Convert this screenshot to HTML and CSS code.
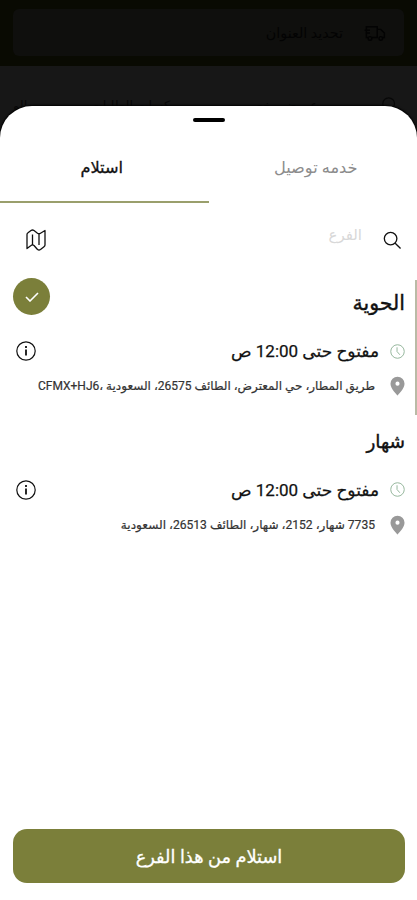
FILE: index.html
```html
<!DOCTYPE html>
<html lang="ar" dir="rtl">
<head>
  <meta charset="UTF-8">
  <meta name="viewport" content="width=device-width, initial-scale=1.0">
  <title>استلام</title>
  <link rel="stylesheet" href="styles.css">
</head>
<body>

  <header class="topbar">
    <div class="address-box">
      <svg class="truck" viewBox="0 0 24 20" fill="none" stroke="currentColor" stroke-width="1.6">
        <path d="M9 15h6V3H3v12h2M15 6h4l4 4v5h-2M1 7h6M2 10h5"/>
        <circle cx="7" cy="16" r="2"/>
        <circle cx="19" cy="16" r="2"/>
      </svg>
      <span>تحديد العنوان</span>
    </div>
  </header>

  <nav class="categories">
    <svg class="cat-search" viewBox="0 0 20 20" fill="none" stroke="currentColor" stroke-width="1.3">
      <circle cx="8.5" cy="8.5" r="6.5"/>
      <path d="M13.5 13.5l5 5"/>
    </svg>
    <span>عروض وخصم</span>
    <span>بوكسات الطلبات</span>
    <span>الو</span>
  </nav>

  <main class="sheet">
    <div class="handle"></div>

    <div class="tabs">
      <button class="tab">خدمه توصيل</button>
      <button class="tab active">استلام</button>
    </div>

    <div class="search">
      <svg class="search-icon" viewBox="0 0 20 20" fill="none" stroke="currentColor" stroke-width="1.4">
        <circle cx="8" cy="8" r="6.6"/>
        <path d="M12.8 12.8l5.7 5.7"/>
      </svg>
      <span class="placeholder">الفرع</span>
      <svg class="map-icon" viewBox="0 0 20 22" fill="none" stroke="currentColor" stroke-width="1.3" stroke-linejoin="round">
        <path d="M1 5.500Q1 4.500 2 3.800L5 1.500q1.500-1 3 0l3.500 2.700q1.500 1 3 0L19 1.500v14.500q0 1-1 1.700L14.500 20.500q-1.500 1-3 0L8 16.500q-1.500-1.200-3 0L1 19.500z"/>
        <path d="M6.500 5.500v10.500M13 5v11"/>
      </svg>
    </div>

    <section class="branch">
      <div class="row title-row">
        <h2>الحوية</h2>
        <span class="check">
          <svg viewBox="0 0 14 10" fill="none" stroke="currentColor" stroke-width="1.6"><path d="M1 5l4 4 8-8"/></svg>
        </span>
      </div>
      <div class="row hours">
        <svg class="clock" viewBox="0 0 16 16" fill="none" stroke="currentColor"><circle cx="8" cy="8" r="7.200"/><path d="M7.500 3.500v4.500l3 3.500"/></svg>
        <span class="time">مفتوح حتى 12:00 ص</span>
        <svg class="info" viewBox="0 0 20 20" fill="none" stroke="currentColor"><circle cx="10" cy="10" r="9.200" stroke-width="1.200"/><path d="M10 8.500v6M10 5v2" stroke-width="1.800"/></svg>
      </div>
      <div class="row place">
        <svg class="pin" viewBox="0 0 16 20"><path d="M8 0a7.500 7.500 0 0 0-7.500 7.500C.5 13 8 20 8 20s7.500-7 7.500-12.500A7.500 7.500 0 0 0 8 0z" fill="currentColor"/><circle cx="8" cy="7.500" r="2.200" fill="#fff"/></svg>
        <span class="address">طريق المطار، حي المعترض، الطائف 26575، السعودية ،CFMX+HJ6</span>
      </div>
    </section>

    <section class="branch">
      <div class="row title-row">
        <h2 class="small">شهار</h2>
      </div>
      <div class="row hours">
        <svg class="clock" viewBox="0 0 16 16" fill="none" stroke="currentColor"><circle cx="8" cy="8" r="7.200"/><path d="M7.500 3.500v4.500l3 3.500"/></svg>
        <span class="time">مفتوح حتى 12:00 ص</span>
        <svg class="info" viewBox="0 0 20 20" fill="none" stroke="currentColor"><circle cx="10" cy="10" r="9.200" stroke-width="1.200"/><path d="M10 8.500v6M10 5v2" stroke-width="1.800"/></svg>
      </div>
      <div class="row place">
        <svg class="pin" viewBox="0 0 16 20"><path d="M8 0a7.500 7.500 0 0 0-7.500 7.500C.5 13 8 20 8 20s7.500-7 7.500-12.500A7.500 7.500 0 0 0 8 0z" fill="currentColor"/><circle cx="8" cy="7.500" r="2.200" fill="#fff"/></svg>
        <span class="address wide">7735 شهار، 2152، شهار، الطائف 26513، السعودية</span>
      </div>
    </section>

    <button class="submit">استلام من هذا الفرع</button>
    <div class="scrollbar"></div>
  </main>

</body>
</html>
```

FILE: styles.css
```css
* {
  margin: 0;
  padding: 0;
  box-sizing: border-box;
}

body {
  height: 900px;
  background: #171717;
  color: #111;
  font-family: Roboto, "DejaVu Sans", sans-serif;
  position: relative;
  overflow: hidden;
}

svg {
  display: block;
  flex: none;
}

button {
  border: none;
  background: none;
  font-family: inherit;
}

/* dimmed page behind the sheet */
.topbar {
  height: 66px;
  padding: 9px 13px;
  background: #090a02;
}

.address-box {
  height: 47px;
  padding: 0 18px;
  border-radius: 6px;
  background: #0f0f0d;
  color: #030303;
  display: flex;
  align-items: center;
  gap: 20px;
  font-size: 14.3px;
}

.truck {
  width: 23px;
  height: 18px;
}

.categories {
  height: 60px;
  padding: 30px 18px 0 0;
  display: flex;
  color: #080808;
  font-size: 13px;
  line-height: 20px;
  white-space: nowrap;
}

.categories span {
  margin-right: 63px;
}

.cat-search {
  width: 18px;
  height: 18px;
}

/* bottom sheet */
.sheet {
  position: absolute;
  top: 106px;
  left: 0;
  right: 0;
  bottom: 0;
  background: #fff;
  border-radius: 32px 32px 0 0;
  box-shadow: 0 0 2px 1px #000;
  display: flex;
  flex-direction: column;
}

.handle {
  width: 32px;
  height: 4px;
  margin: 12px auto 0;
  border-radius: 2px;
  background: #000;
}

.tabs {
  display: flex;
  height: 81px;
}

.tab {
  width: 50%;
  padding: 12px 0 0 6px;
  font-size: 16.2px;
  color: #8c8c8c;
  border-bottom: 2px solid transparent;
}

.tab.active {
  padding: 12px 5px 0 0;
  color: #111;
  border-color: #9a9f6c;
  -webkit-text-stroke: 0.3px;
}

.search {
  height: 74px;
  padding: 0 15px 0 26px;
  display: flex;
  align-items: center;
}

.search-icon {
  width: 19px;
  height: 19px;
}

.placeholder {
  margin-right: 21px;
  margin-bottom: 10px;
  font-size: 15px;
  color: #d8d8d8;
}

.map-icon {
  width: 20px;
  height: 22px;
  margin-right: auto;
}

.branch {
  height: 138.5px;
  padding: 0 12px 0 16px;
}

.row {
  display: flex;
  align-items: center;
}

.title-row {
  height: 52px;
}

.title-row h2 {
  font-size: 20.5px;
  font-weight: 500;
  -webkit-text-stroke: 0.4px;
}

.title-row h2.small {
  font-size: 18.5px;
}

.check {
  width: 37px;
  height: 37px;
  margin: -13px auto 0 -3px;
  border-radius: 50%;
  background: #7b7f3a;
  color: #fff;
  display: flex;
  align-items: center;
  justify-content: center;
}

.check svg {
  width: 14px;
  height: 10px;
}

.hours {
  height: 44px;
}

.clock {
  width: 15px;
  height: 15px;
  margin-left: 11px;
  color: #8fb296;
}

.time {
  font-size: 17px;
  -webkit-text-stroke: 0.25px;
}

.info {
  width: 20px;
  height: 20px;
  margin-right: auto;
}

.place {
  height: 26px;
}

.pin {
  width: 15px;
  height: 20px;
  margin-left: 15px;
  color: #999;
}

.address {
  font-size: 12px;
  color: #333;
  white-space: nowrap;
  -webkit-text-stroke: 0.2px;
}

.address.wide {
  font-size: 12.1px;
}

.submit {
  height: 54px;
  margin: auto 12px 17px 13px;
  border-radius: 14px;
  background: #7b7f3a;
  color: #fff;
  font-size: 17.8px;
  font-weight: 500;
  -webkit-text-stroke: 0.3px;
}

.scrollbar {
  position: absolute;
  top: 174px;
  right: 0;
  width: 2px;
  height: 135px;
  background: #b9bba6;
}
```
